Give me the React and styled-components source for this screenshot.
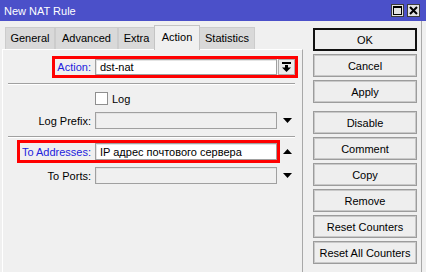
import React from 'react';
import styled, { createGlobalStyle } from 'styled-components';

const GlobalStyle = createGlobalStyle`
html, body {
    margin: 0;
    padding: 0;
    background: #f0f0f0;
}
body {
    font-family: "Liberation Sans", Arial, sans-serif;
    font-size: 11px;
    color: #000;
}
`

const tabs = [
    { title: 'General', width: 50 },
    { title: 'Advanced', width: 63 },
    { title: 'Extra', width: 37 },
    { title: 'Action', width: 46, active: true },
    { title: 'Statistics', width: 56 },
];

const buttons = [
    { title: 'OK', primary: true },
    { title: 'Cancel' },
    { title: 'Apply' },
    { title: 'Disable', spaced: true },
    { title: 'Comment' },
    { title: 'Copy' },
    { title: 'Remove' },
    { title: 'Reset Counters' },
    { title: 'Reset All Counters' },
];

const ArrowDown = () => (
    <svg width="9" height="5" viewBox="0 0 9 5">
        <polygon points="0,0 9,0 4.5,5" fill="#000" />
    </svg>
)

const ArrowUp = () => (
    <svg width="9" height="5" viewBox="0 0 9 5">
        <polygon points="0,5 9,5 4.5,0" fill="#000" />
    </svg>
)

const DropIcon = () => (
    <svg width="9" height="10" viewBox="0 0 9 10">
        <rect x="0" y="0" width="9" height="2" fill="#000" />
        <rect x="3" y="3" width="3" height="3" fill="#000" />
        <polygon points="0,5.5 9,5.5 4.5,10" fill="#000" />
    </svg>
)

const App = () => {
    return (
        <>
            <GlobalStyle />
            <Window>
                <TitleBar>
                    <Title>New NAT Rule</Title>
                    <TitleButtons>
                        <TitleButton>
                            <svg width="9" height="9" viewBox="0 0 9 9">
                                <rect x="0.5" y="0.5" width="8" height="8" fill="none" stroke="#000" />
                                <rect x="0" y="0" width="9" height="2" fill="#000" />
                            </svg>
                        </TitleButton>
                        <TitleButton>
                            <svg width="9" height="9" viewBox="0 0 9 9">
                                <path d="M1 1 L8 8 M8 1 L1 8" stroke="#000" strokeWidth="2" />
                            </svg>
                        </TitleButton>
                    </TitleButtons>
                </TitleBar>
                <Body>
                    <LeftPane>
                        <TabStrip>
                            {tabs.map(t => (
                                <Tab key={t.title} $width={t.width} $active={t.active}>{t.title}</Tab>
                            ))}
                        </TabStrip>
                        <Panel>
                            <Row $top={8}>
                                <Highlight $tail={2}>
                                    <Label $changed>Action:</Label>
                                    <Field $height={16} $filled>dst-nat</Field>
                                    <DropButton><DropIcon /></DropButton>
                                </Highlight>
                            </Row>
                            <Separator />
                            <CheckRow>
                                <CheckBox />
                                <span>Log</span>
                            </CheckRow>
                            <Row $top={7}>
                                <Label>Log Prefix:</Label>
                                <Field />
                                <ArrowCell><ArrowDown /></ArrowCell>
                            </Row>
                            <Separator $top={7} />
                            <Row $top={5}>
                                <Highlight>
                                    <Label $changed>To Addresses:</Label>
                                    <Field $filled>IP адрес почтового сервера</Field>
                                </Highlight>
                                <ArrowCell><ArrowUp /></ArrowCell>
                            </Row>
                            <Row $top={7}>
                                <Label>To Ports:</Label>
                                <Field />
                                <ArrowCell><ArrowDown /></ArrowCell>
                            </Row>
                        </Panel>
                    </LeftPane>
                    <ButtonColumn>
                        {buttons.map(b => (
                            <Button key={b.title} $primary={b.primary} $spaced={b.spaced}>{b.title}</Button>
                        ))}
                    </ButtonColumn>
                </Body>
            </Window>
        </>
    )
}

const Window = styled.div`
width: 426px;
height: 272px;
display: flex;
flex-direction: column;
background: #f0f0f0;
overflow: hidden;
`

const TitleBar = styled.div`
height: 21px;
flex: none;
box-sizing: border-box;
background: #4b50c9;
color: #fff;
display: flex;
align-items: center;
padding: 0 6px 0 4px;
`

const Title = styled.span`
flex: 1;
font-size: 11px;
`

const TitleButtons = styled.div`
display: flex;
gap: 3px;
`

const TitleButton = styled.div`
width: 13px;
height: 13px;
box-sizing: border-box;
background: #e2e2e2;
border: 1px solid #3c3c3c;
display: flex;
align-items: center;
justify-content: center;
`

const Body = styled.div`
flex: 1;
display: flex;
width: 422px;
box-sizing: border-box;
border-right: 1px solid #a8a8a8;
`

const LeftPane = styled.div`
width: 303px;
padding-left: 2px;
box-sizing: border-box;
display: flex;
flex-direction: column;
`

const TabStrip = styled.div`
height: 28px;
flex: none;
display: flex;
align-items: flex-end;
padding-left: 3px;
`

const Tab = styled.div`
width: ${p => p.$width}px;
height: ${p => p.$active ? 25 : 22}px;
box-sizing: border-box;
display: flex;
align-items: center;
justify-content: center;
background: ${p => p.$active ? '#f0f0f0' : '#d9d9d9'};
border: 1px solid ${p => p.$active ? '#c4c4c4' : '#cccccc'};
border-bottom: none;
margin-left: ${p => p.$active ? -1 : 0}px;
margin-right: ${p => p.$active ? -1 : 0}px;
padding-bottom: ${p => p.$active ? 3 : 1}px;
position: relative;
z-index: ${p => p.$active ? 1 : 0};
margin-bottom: ${p => p.$active ? -1 : 0}px;
`

const Panel = styled.div`
flex: 1;
display: flex;
flex-direction: column;
border-top: 1px solid #ffffff;
border-left: 1px solid #ffffff;
border-right: 1px solid #a8a8a8;
`

const Row = styled.div`
width: 294px;
height: 17px;
margin-top: ${p => p.$top}px;
display: flex;
align-items: center;
justify-content: flex-end;
`

const Highlight = styled.div`
display: flex;
align-items: center;
padding-left: 2px;
margin-right: ${p => p.$tail || 0}px;
outline: 3px solid #ff0000;
`

const Label = styled.span`
margin-right: 4px;
white-space: nowrap;
color: ${p => p.$changed ? '#2222dd' : '#000'};
`

const Field = styled.div`
width: 182px;
height: ${p => p.$height || 17}px;
box-sizing: border-box;
padding: 0 4px;
display: flex;
align-items: center;
white-space: nowrap;
background: ${p => p.$filled ? '#ffffff' : '#f0f0f0'};
border: 1px solid #a0a0a0;
box-shadow: inset 1px 1px 0 #e4e4e4;
`

const DropButton = styled.div`
width: 17px;
height: 16px;
margin-left: 1px;
box-sizing: border-box;
display: flex;
align-items: center;
justify-content: center;
background: #ececec;
border: 1px solid #adadad;
`

const ArrowCell = styled.div`
width: 20px;
display: flex;
justify-content: center;
`

const Separator = styled.div`
width: 287px;
height: 1px;
margin: ${p => p.$top || 8}px 0 0 5px;
background: #a0a0a0;
border-bottom: 1px solid #ffffff;
`

const CheckRow = styled.div`
display: flex;
align-items: center;
height: 13px;
margin-top: 7px;
padding-left: 92px;
`

const CheckBox = styled.div`
width: 13px;
height: 13px;
box-sizing: border-box;
margin-right: 4px;
background: #ffffff;
border: 1px solid #8f8f8f;
`

const ButtonColumn = styled.div`
width: 104px;
margin-left: 10px;
padding-top: 7px;
display: flex;
flex-direction: column;
gap: 3px;
`

const Button = styled.div`
height: 23px;
box-sizing: border-box;
margin-top: ${p => p.$spaced ? 5 : 0}px;
display: flex;
align-items: center;
justify-content: center;
background: #eeeeee;
border: ${p => p.$primary ? '2px solid #111' : '1px solid #9c9c9c'};
box-shadow: ${p => p.$primary ? 'none' : 'inset 0 0 0 1px #c9c9c9'};
`

export default App;
